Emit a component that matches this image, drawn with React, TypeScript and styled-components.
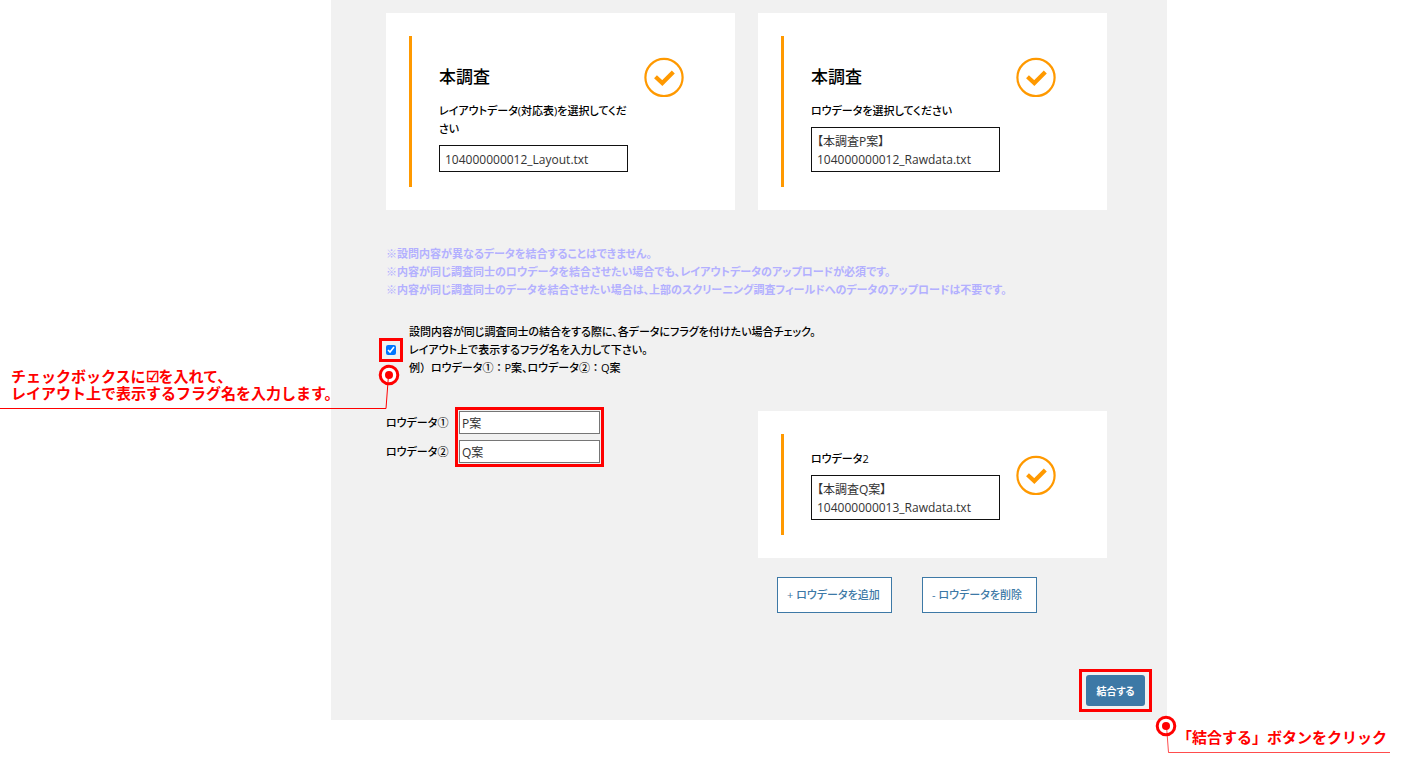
import React, { useState } from "react";
import styled, { createGlobalStyle } from "styled-components";

const RED = "#ff0000";
const ORANGE = "#ff9900";
const BLUE = "#3d79a6";

const GlobalStyle = createGlobalStyle`
  *, *::before, *::after { box-sizing: border-box; }
  body {
    margin: 0;
    background: #fff;
    color: #000;
    font-family: "Open Sans", "Noto Sans CJK JP", sans-serif;
    font-size: 11px;
    line-height: 18px;
    font-feature-settings: "palt";
  }
  h2, p { margin: 0; }
  button, input, textarea { font: inherit; font-feature-settings: inherit; }
`;

const Page = styled.div`
  display: grid;
  grid-template-columns: 331px minmax(0, 1fr) 242px;
  padding-bottom: 37px;
`;

const Panel = styled.main`
  grid-column: 2;
  padding: 13px 60px 8px 55px;
  background: #f1f1f1;
`;

const Columns = styled.div`
  display: grid;
  grid-template-columns: 1fr 1fr;
  column-gap: 23px;
  align-items: start;
`;

const Card = styled.section`
  padding: 23px;
  background: #fff;
`;

const CardBody = styled.div<{ $compact?: boolean }>`
  display: flex;
  align-items: flex-start;
  gap: 16px;
  padding: 0 0 15px 27px;
  border-left: 3px solid ${ORANGE};

  > div {
    width: 189px;
    padding-top: ${(p) => (p.$compact ? 16 : 29)}px;
  }
  > svg {
    flex: none;
    margin-top: 21px;
  }
`;

const CardTitle = styled.h2`
  margin-bottom: 13px;
  font-size: 17px;
  font-weight: 500;
  line-height: 24px;
  font-feature-settings: normal;
`;

const FieldLabel = styled.label`
  display: block;
  font-weight: 500;
`;

const FileBox = styled.textarea`
  display: block;
  width: 100%;
  margin-top: 7px;
  padding: 5px 5px 2px;
  border: 1px solid #111;
  border-radius: 0;
  background: #fff;
  color: #333;
  font-size: 12px;
  line-height: 18px;
  resize: none;
  overflow: hidden;
  outline: none;
`;

const Notes = styled.div`
  margin-top: 35px;
  color: #b3b0ff;
  font-weight: 700;
`;

const FlagRow = styled.div`
  display: flex;
  align-items: center;
  gap: 13px;
  margin: 24px 0 34px;
  font-weight: 500;
`;

const FullWidth = styled.span`
  font-feature-settings: normal;
`;

const CheckFrame = styled.div`
  position: relative;
  display: flex;
  outline: 3px solid ${RED};
  outline-offset: 4px;

  input {
    width: 10px;
    height: 10px;
    margin: 0;
  }
`;

const FlagNames = styled.div`
  display: flex;
  gap: 14px;
`;

const NameLabels = styled.div`
  display: grid;
  gap: 6px;
  width: 59px;
  font-weight: 500;
  line-height: 23px;
  white-space: nowrap;
`;

const NameInputs = styled.div`
  display: grid;
  gap: 6px;
  outline: 3px solid ${RED};
  outline-offset: 1px;
`;

const NameInput = styled.input`
  width: 141px;
  height: 23px;
  padding: 0 2px;
  border: 1px solid #767676;
  border-radius: 0;
  background: #fff;
  color: #333;
  font-size: 12px;
`;

const RowButtons = styled.div`
  display: flex;
  gap: 30px;
  margin: 19px 0 0 19px;
`;

const OutlineButton = styled.button`
  width: 115px;
  height: 36px;
  padding: 0 9px;
  border: 1px solid ${BLUE};
  background: #fff;
  color: ${BLUE};
  font-weight: 500;
  text-align: left;
  white-space: nowrap;
`;

const Actions = styled.div`
  display: flex;
  justify-content: flex-end;
  margin: 56px -45px 0 0;
`;

const ActionFrame = styled.div`
  position: relative;
  padding: 3px 4px;
  border: 3px solid ${RED};
`;

const PrimaryButton = styled.button`
  display: block;
  width: 59px;
  height: 31px;
  padding: 0;
  border: 0;
  border-radius: 3px;
  background: ${BLUE};
  color: #fff;
  font-size: 10px;
  font-weight: 700;
`;

const Callout = styled.div<{ $top: number; $left: number }>`
  position: absolute;
  top: ${(p) => p.$top}px;
  left: ${(p) => p.$left}px;
  color: ${RED};
  font-size: 15px;
  font-weight: 700;
  line-height: 17px;
  font-feature-settings: normal;
  white-space: nowrap;
  pointer-events: none;

  > svg { display: block; }
`;

const CalloutText = styled.p<{ $top: number; $left: number }>`
  position: absolute;
  top: ${(p) => p.$top}px;
  left: ${(p) => p.$left}px;
`;

const DoneIcon = () => (
  <svg width="40" height="40" viewBox="0 0 40 40" fill="none" stroke={ORANGE} aria-hidden="true">
    <circle cx="20" cy="20.5" r="18.6" strokeWidth="2.2" />
    <path d="M11.5 19.8L18.3 26L29.3 15" strokeWidth="4.2" />
  </svg>
);

type FileCardProps = {
  id: string;
  title?: string;
  label: string;
  file: string;
};

const FileCard = ({ id, title, label, file }: FileCardProps) => (
  <Card>
    <CardBody $compact={!title}>
      <div>
        {title && <CardTitle>{title}</CardTitle>}
        <FieldLabel htmlFor={id}>{label}</FieldLabel>
        <FileBox id={id} readOnly rows={file.split("\n").length} value={file} />
      </div>
      <DoneIcon />
    </CardBody>
  </Card>
);

export default function App() {
  const [flagged, setFlagged] = useState(true);
  const [names, setNames] = useState(["P案", "Q案"]);
  const rename = (index: number, value: string) =>
    setNames(names.map((name, i) => (i === index ? value : name)));

  return (
    <>
      <GlobalStyle />
      <Page>
        <Panel>
          <Columns>
            <FileCard
              id="layout"
              title="本調査"
              label="レイアウトデータ(対応表)を選択してください"
              file="104000000012_Layout.txt"
            />
            <FileCard
              id="raw1"
              title="本調査"
              label="ロウデータを選択してください"
              file={"【本調査P案】\n104000000012_Rawdata.txt"}
            />
          </Columns>

          <Notes>
            <p>※設問内容が異なるデータを結合することはできません。</p>
            <p>※内容が同じ調査同士のロウデータを結合させたい場合でも、レイアウトデータのアップロードが必須です。</p>
            <p>※内容が同じ調査同士のデータを結合させたい場合は、上部のスクリーニング調査フィールドへのデータのアップロードは不要です。</p>
          </Notes>

          <FlagRow>
            <CheckFrame>
              <input
                id="flag"
                type="checkbox"
                checked={flagged}
                onChange={(e) => setFlagged(e.target.checked)}
              />
              <Callout $top={19} $left={-386}>
                <svg width="402" height="48" viewBox="0 0 402 48" fill="none">
                  <circle cx="389" cy="11" r="8.8" stroke={RED} strokeWidth="3" fill="#fff" />
                  <circle cx="389" cy="11" r="4" fill={RED} />
                  <path d="M0 44.5H386L388.5 11" stroke={RED} strokeWidth="1" />
                </svg>
                <CalloutText $top={4} $left={11}>
                  チェックボックスに☑を入れて、
                  <br />
                  レイアウト上で表示するフラグ名を入力します。
                </CalloutText>
              </Callout>
            </CheckFrame>
            <label htmlFor="flag">
              設問内容が同じ調査同士の結合をする際に、各データにフラグを付けたい場合チェック。
              <br />
              レイアウト上で表示するフラグ名を入力して下さい。
              <br />
              例<FullWidth>）</FullWidth>ロウデータ①<FullWidth>：</FullWidth>P案、ロウデータ②
              <FullWidth>：</FullWidth>Q案
            </label>
          </FlagRow>

          <Columns>
            <FlagNames>
              <NameLabels>
                <label htmlFor="name1">ロウデータ①</label>
                <label htmlFor="name2">ロウデータ②</label>
              </NameLabels>
              <NameInputs>
                <NameInput id="name1" value={names[0]} onChange={(e) => rename(0, e.target.value)} />
                <NameInput id="name2" value={names[1]} onChange={(e) => rename(1, e.target.value)} />
              </NameInputs>
            </FlagNames>
            <div>
              <FileCard
                id="raw2"
                label="ロウデータ2"
                file={"【本調査Q案】\n104000000013_Rawdata.txt"}
              />
              <RowButtons>
                <OutlineButton type="button">+ ロウデータを追加</OutlineButton>
                <OutlineButton type="button">- ロウデータを削除</OutlineButton>
              </RowButtons>
            </div>
          </Columns>

          <Actions>
            <ActionFrame>
              <PrimaryButton type="button">結合する</PrimaryButton>
              <Callout $top={43} $left={72}>
                <svg width="238" height="40" viewBox="0 0 238 40" fill="none">
                  <circle cx="12" cy="11" r="8.8" stroke={RED} strokeWidth="3" fill="#fff" />
                  <circle cx="12" cy="11" r="4" fill={RED} />
                  <path d="M12.5 11L14.5 37.5H236" stroke={RED} strokeWidth="0.7" />
                </svg>
                <CalloutText $top={14} $left={23}>「結合する」ボタンをクリック</CalloutText>
              </Callout>
            </ActionFrame>
          </Actions>
        </Panel>
      </Page>
    </>
  );
}
